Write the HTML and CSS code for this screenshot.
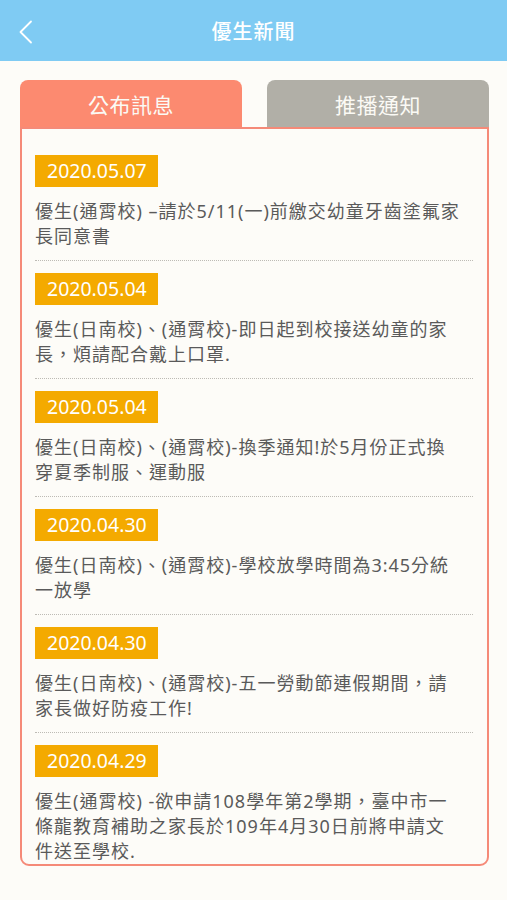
FILE: index.html
```html
<!DOCTYPE html>
<html lang="zh-Hant">
<head>
  <meta charset="UTF-8" />
  <meta name="viewport" content="width=device-width, initial-scale=1.0"/>
  <title>優生新聞</title>
  <link rel="stylesheet" href="styles.css">
</head>
<body>
  <header class="topbar">
    <svg class="back" width="14" height="24" viewBox="0 0 14 24">
      <polyline points="12,1.5 1.5,12 12,22.5" fill="none" stroke="#fff" stroke-width="1.8" stroke-linecap="round" stroke-linejoin="round"/>
    </svg>
    <h1>優生新聞</h1>
  </header>

  <main class="page">
    <div class="tabs">
      <div class="tab active">公布訊息</div>
      <div class="tab">推播通知</div>
    </div>

    <div class="card">
      <ul class="news">
        <li>
          <span class="date">2020.05.07</span>
          <p>優生(通霄校) –請於5/11(一)前繳交幼童牙齒塗氟家長同意書</p>
        </li>
        <li>
          <span class="date">2020.05.04</span>
          <p>優生(日南校)、(通霄校)-即日起到校接送幼童的家長，煩請配合戴上口罩.</p>
        </li>
        <li>
          <span class="date">2020.05.04</span>
          <p>優生(日南校)、(通霄校)-換季通知!於5月份正式換穿夏季制服、運動服</p>
        </li>
        <li>
          <span class="date">2020.04.30</span>
          <p>優生(日南校)、(通霄校)-學校放學時間為3:45分統一放學</p>
        </li>
        <li>
          <span class="date">2020.04.30</span>
          <p>優生(日南校)、(通霄校)-五一勞動節連假期間，請家長做好防疫工作!</p>
        </li>
        <li>
          <span class="date">2020.04.29</span>
          <p>優生(通霄校) -欲申請108學年第2學期，臺中市一條龍教育補助之家長於109年4月30日前將申請文件送至學校.</p>
        </li>
      </ul>
    </div>
  </main>
</body>
</html>
```

FILE: styles.css
```css
* {
  box-sizing: border-box;
}

html, body {
  height: 100%;
}

body {
  margin: 0;
  font-family: "Noto Sans", "Noto Sans CJK TC", sans-serif;
  background: #fdfcf8;
  color: #5a5a5a;
  display: flex;
  flex-direction: column;
  overflow: hidden;
}

.topbar {
  height: 61px;
  background: #7fcbf3;
  display: flex;
  align-items: center;
  justify-content: center;
  position: relative;
}

.topbar h1 {
  margin: 0;
  font-size: 20px;
  font-weight: 500;
  color: #fff;
  letter-spacing: 1px;
}

.back {
  position: absolute;
  left: 19px;
  top: 20px;
}

.page {
  flex: 1;
  display: flex;
  flex-direction: column;
  padding: 19px 18px 34px 20px;
  min-height: 0;
}

.tabs {
  display: grid;
  grid-template-columns: 1fr 1fr;
  gap: 25px;
}

.tab {
  height: 47px;
  border-radius: 8px 8px 0 0;
  background: #b1afa7;
  color: #fbfaf5;
  font-size: 21px;
  display: flex;
  align-items: center;
  justify-content: center;
  letter-spacing: 0.5px;
}

.tab.active {
  background: #fc8a70;
}

.card {
  flex: 1;
  min-height: 0;
  border: 2px solid #f58a78;
  border-radius: 0 0 9px 9px;
  overflow: hidden;
  padding: 0 14px 0 13px;
}

.news {
  list-style: none;
  margin: 0;
  padding: 14px 0 0;
}

.news li {
  padding: 12px 0 11px;
  border-bottom: 1px dotted #bdbbb5;
}

.date {
  display: inline-block;
  height: 32px;
  line-height: 32px;
  padding: 0 11px 0 12px;
  background: #f4aa00;
  color: #fff;
  font-size: 19.5px;
}

.news p {
  margin: 12px 0 0;
  font-size: 18px;
  line-height: 25px;
  letter-spacing: 1px;
  padding-right: 13px;
}
```
